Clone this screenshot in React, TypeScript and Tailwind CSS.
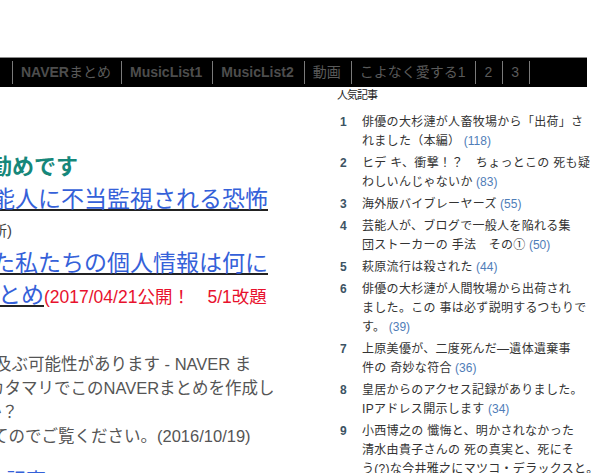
const navItems: { latin?: string; jp?: string }[] = [
  { latin: "NAVER", jp: "まとめ" },
  { latin: "MusicList1" },
  { latin: "MusicList2" },
  { jp: "動画" },
  { jp: "こよなく愛する1" },
  { jp: "2" },
  { jp: "3" },
];

const ranking: { lines: string[]; count: string }[] = [
  { lines: ["俳優の大杉漣が人畜牧場から「出荷」さ", "れました（本編）"], count: "(118)" },
  { lines: ["ヒデ キ、衝撃！？　ちょっとこの 死も疑", "わしいんじゃないか"], count: "(83)" },
  { lines: ["海外版バイブレーヤーズ"], count: "(55)" },
  { lines: ["芸能人が、ブログで一般人を陥れる集", "団ストーカーの 手法　その①"], count: "(50)" },
  { lines: ["萩原流行は殺された"], count: "(44)" },
  {
    lines: ["俳優の大杉漣が人間牧場から出荷され", "ました。この 事は必ず説明するつもりで", "す。"],
    count: "(39)",
  },
  { lines: ["上原美優が、二度死んだ―遺体遺棄事", "件の 奇妙な符合"], count: "(36)" },
  { lines: ["皇居からのアクセス記録がありました。", "IPアドレス開示します"], count: "(34)" },
  {
    lines: ["小西博之の 懺悔と、明かされなかった", "清水由貴子さんの 死の真実と、死にそ", "う(?)な今井雅之にマツコ・デラックスと。"],
    count: "",
  },
];

function NavBar() {
  return (
    <nav className="flex h-[30px] w-[587px] items-center border-t border-[#8c8c8c] bg-black pl-[12px] text-[14px] text-[#4d4d4d]">
      {navItems.map((item, i) => (
        <div
          key={i}
          className={`flex h-[23px] items-center whitespace-nowrap border-l border-[#7a7a7a] pl-[8px] pr-[10px] ${
            i === navItems.length - 1 ? "border-r" : ""
          }`}
        >
          {item.latin ? <span className="font-bold">{item.latin}</span> : null}
          {item.jp ? <span className="text-[#5a5a5a]">{item.jp}</span> : null}
        </div>
      ))}
    </nav>
  );
}

function PopularList() {
  return (
    <aside className="w-[252px] shrink-0 text-[#333]">
      <h2 className="ml-[1px] text-[11px] leading-[16px] tracking-[-1px] text-[#222]">人気記事</h2>
      <ol className="mt-[10px] pl-[4px]">
        {ranking.map((r, i) => (
          <li key={i} className="mb-[3px] flex text-[12px] leading-[19px]">
            <span className="w-[22px] shrink-0 font-bold text-[#3c5363]">{i + 1}</span>
            <div className="whitespace-nowrap tracking-[0.3px]">
              {r.lines.map((l, j) => (
                <div key={j}>
                  {l}
                  {j === r.lines.length - 1 && r.count ? (
                    <span className="tracking-normal text-[#4f7db8]"> {r.count}</span>
                  ) : null}
                </div>
              ))}
            </div>
          </li>
        ))}
      </ol>
    </aside>
  );
}

function ArticleColumn() {
  const link = "text-[#3561d9] underline decoration-[#222] underline-offset-[2px]";
  return (
    <section className="w-[336px] shrink-0 overflow-hidden whitespace-nowrap">
      <div className="ml-[-32px] mt-[64px] text-[22px] font-bold leading-[32px] text-[#16877a]">お勧めです</div>
      <div className="ml-[-8px] text-[23px] leading-[32px]">
        <span className={link}>能人に不当監視される恐怖</span>
      </div>
      <div className="ml-[-28px] text-[15px] leading-[32px] text-[#444]">(最新)</div>
      <div className="ml-[-8px] text-[23px] leading-[32px]">
        <span className={link}>た私たちの個人情報は何に</span>
      </div>
      <div className="ml-[-2px] text-[23px] leading-[32px]">
        <span className={link}>とめ</span>
        <span className="text-[17.5px] text-[#e8112d]">(2017/04/21公開！　5/1改題</span>
      </div>
      <div className="mt-[39px] text-[16.5px] leading-[24px] text-[#555]">
        <div className="ml-[-5px]">及ぶ可能性があります - NAVER ま</div>
        <div className="ml-[-12px]">カタマリでこのNAVERまとめを作成し</div>
        <div className="ml-[-15px]">か？</div>
        <div className="ml-[-8px]">てのでご覧ください。(2016/10/19)</div>
      </div>
      <div className="ml-[-14px] mt-[17px] text-[20px] leading-[32px] text-[#3561d9]">の記事</div>
    </section>
  );
}

export default function App() {
  return (
    <div className="h-[473px] w-[600px] overflow-hidden bg-white pt-[57px] font-[family-name:'Liberation_Sans','Noto_Sans_CJK_JP',sans-serif]">
      <NavBar />
      <div className="flex">
        <ArticleColumn />
        <PopularList />
      </div>
    </div>
  );
}
